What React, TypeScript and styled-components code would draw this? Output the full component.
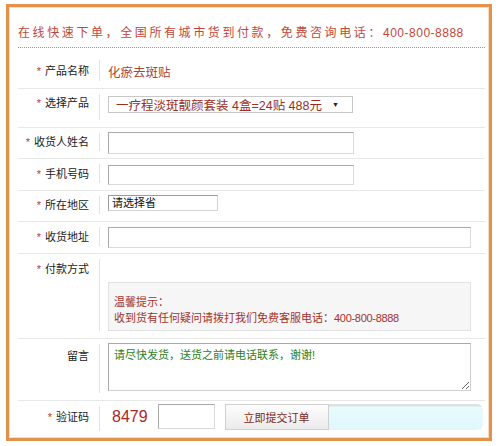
import styled, { createGlobalStyle } from "styled-components";

const GlobalStyle = createGlobalStyle`
  body {
    margin: 0;
    background: #fff;
    font-family: "Liberation Sans", "Noto Sans CJK SC", sans-serif;
  }
`;

const App = () => {
  return (
    <>
      <GlobalStyle />
      <Frame>
        <Title>
          在线快速下单，全国所有城市货到付款，免费咨询电话：<TitleNum>400-800-8888</TitleNum>
        </Title>
        <Form>
          <Row $h={34}>
            <Label>
              <Star>*</Star>产品名称
            </Label>
            <Value>
              <ProductName>化瘀去斑贴</ProductName>
            </Value>
          </Row>
          <Row $h={39}>
            <Label $top={1}>
              <Star>*</Star>选择产品
            </Label>
            <Value $top={7}>
              <SelectBox>
                一疗程淡斑靓颜套装 4盒=24贴 488元<Arrow>▼</Arrow>
              </SelectBox>
            </Value>
          </Row>
          <Row $h={31}>
            <Label>
              <Star>*</Star>收货人姓名
            </Label>
            <Value>
              <TextInput $w={246} $h={22} />
            </Value>
          </Row>
          <Row $h={32}>
            <Label>
              <Star>*</Star>手机号码
            </Label>
            <Value>
              <TextInput $w={246} $h={20} />
            </Value>
          </Row>
          <Row $h={31}>
            <Label>
              <Star>*</Star>所在地区
            </Label>
            <Value $top={4}>
              <RegionBox>请选择省</RegionBox>
            </Value>
          </Row>
          <Row $h={32}>
            <Label>
              <Star>*</Star>收货地址
            </Label>
            <Value>
              <TextInput $w={363} $h={21} />
            </Value>
          </Row>
          <Row $h={85}>
            <Label $top={2}>
              <Star>*</Star>付款方式
            </Label>
            <Value $top={28}>
              <TipBox>
                温馨提示：
                <br />
                收到货有任何疑问请拨打我们免费客服电话：<TipNum>400-800-8888</TipNum>
              </TipBox>
            </Value>
          </Row>
          <Row $h={62}>
            <Label $top={4}>留言</Label>
            <Value $top={4}>
              <Message readOnly defaultValue="请尽快发货，送货之前请电话联系，谢谢!" />
            </Value>
          </Row>
          <Row $h={37} $last>
            <Label $top={3}>
              <Star>*</Star>验证码
            </Label>
            <Value $top={3}>
              <Code>8479</Code>
              <TextInput $w={57} $h={25} />
              <SubmitWrap>
                <SubmitButton>立即提交订单</SubmitButton>
              </SubmitWrap>
            </Value>
          </Row>
        </Form>
      </Frame>
    </>
  );
};

export default App;

const Frame = styled.div`
  margin: 4px 0 0 6px;
  width: 486px;
  height: 437px;
  box-sizing: border-box;
  border: 3px solid #e3924d;
  box-shadow: inset 0 0 0 1px #f8dcc2;
  background: #fff;
`;

const Title = styled.div`
  margin: 16px 4px 0 9px;
  padding-bottom: 4px;
  border-bottom: 1px dotted #c98a4b;
  font-size: 12px;
  line-height: 20px;
  letter-spacing: 2.6px;
  color: #c2473b;
  white-space: nowrap;
`;

const TitleNum = styled.span`
  letter-spacing: 0.5px;
`;

const Form = styled.div`
  margin: 7px 4px 0 9px;
`;

const Row = styled.div<{ $h: number; $last?: boolean }>`
  display: flex;
  height: ${(p) => p.$h}px;
  box-sizing: border-box;
  border-bottom: ${(p) => (p.$last ? "none" : "1px solid #e8e8e8")};
`;

const Label = styled.div<{ $top?: number }>`
  width: 82px;
  box-sizing: border-box;
  margin: 5px 0 7px;
  padding-right: 10px;
  padding-top: ${(p) => p.$top ?? 0}px;
  border-right: 1px solid #e2e2e2;
  display: flex;
  justify-content: flex-end;
  align-items: ${(p) => (p.$top !== undefined ? "flex-start" : "center")};
  font-size: 11px;
  line-height: 16px;
  color: #222;
  white-space: nowrap;
`;

const Star = styled.span`
  color: #c0392b;
  font-size: 11px;
  margin-right: 4px;
`;

const Value = styled.div<{ $top?: number }>`
  flex: 1;
  padding-left: 8px;
  padding-top: ${(p) => p.$top ?? 0}px;
  display: flex;
  align-items: ${(p) => (p.$top !== undefined ? "flex-start" : "center")};
`;

const ProductName = styled.span`
  font-size: 12.5px;
  color: #a8443a;
`;

const SelectBox = styled.div`
  width: 245px;
  height: 17px;
  box-sizing: border-box;
  border: 1px solid #c8c8c8;
  padding: 0 7px;
  display: flex;
  align-items: center;
  font-size: 12.5px;
  color: #9c2f25;
  white-space: nowrap;
`;

const Arrow = styled.span`
  font-size: 7px;
  color: #222;
  margin-left: 10px;
`;

const TextInput = styled.input<{ $w: number; $h: number }>`
  width: ${(p) => p.$w}px;
  height: ${(p) => p.$h}px;
  box-sizing: border-box;
  margin: 0;
  padding: 0 3px;
  border: 1px solid;
  border-color: #a9a9a9 #dadada #dadada #a9a9a9;
  background: #fff;
  outline: none;
`;

const RegionBox = styled.div`
  width: 110px;
  height: 16px;
  box-sizing: border-box;
  border: 1px solid;
  border-color: #9a9a9a #d4d4d4 #d4d4d4 #9a9a9a;
  padding-left: 3px;
  font-size: 11px;
  line-height: 14px;
  color: #111;
`;

const TipBox = styled.div`
  width: 363px;
  height: 49px;
  box-sizing: border-box;
  background: #f6f6f6;
  border: 1px solid #e2e2e2;
  padding: 11px 0 0 5px;
  font-size: 11px;
  line-height: 16px;
  color: #a3322a;
  white-space: nowrap;
`;

const TipNum = styled.span`
  letter-spacing: -0.3px;
`;

const Message = styled.textarea`
  width: 363px;
  height: 48px;
  box-sizing: border-box;
  margin: 0;
  padding: 4px 5px;
  border: 1px solid;
  border-color: #a9a9a9 #cfcfcf #cfcfcf #a9a9a9;
  font-family: "Liberation Sans", "Noto Sans CJK SC", sans-serif;
  font-size: 11px;
  line-height: 14px;
  color: #2e7d22;
  resize: both;
  outline: none;
`;

const Code = styled.span`
  margin: 0 10px 0 4px;
  font-size: 16px;
  line-height: 25px;
  color: #a8282a;
`;

const SubmitWrap = styled.div`
  margin-left: 10px;
  width: 258px;
  height: 26px;
  display: flex;
  border-radius: 0 6px 6px 0;
  background: linear-gradient(to bottom, #e0e0e0 0, #e0e0e0 2px, #e8fbfe 3px, #dff7fc 100%);
`;

const SubmitButton = styled.button`
  width: 104px;
  height: 26px;
  margin: 0;
  padding: 0;
  border: 1px solid #cfcfcf;
  background: linear-gradient(to bottom, #fdfdfd, #ebebeb);
  font-family: "Liberation Sans", "Noto Sans CJK SC", sans-serif;
  font-size: 11px;
  color: #7a2a20;
`;
